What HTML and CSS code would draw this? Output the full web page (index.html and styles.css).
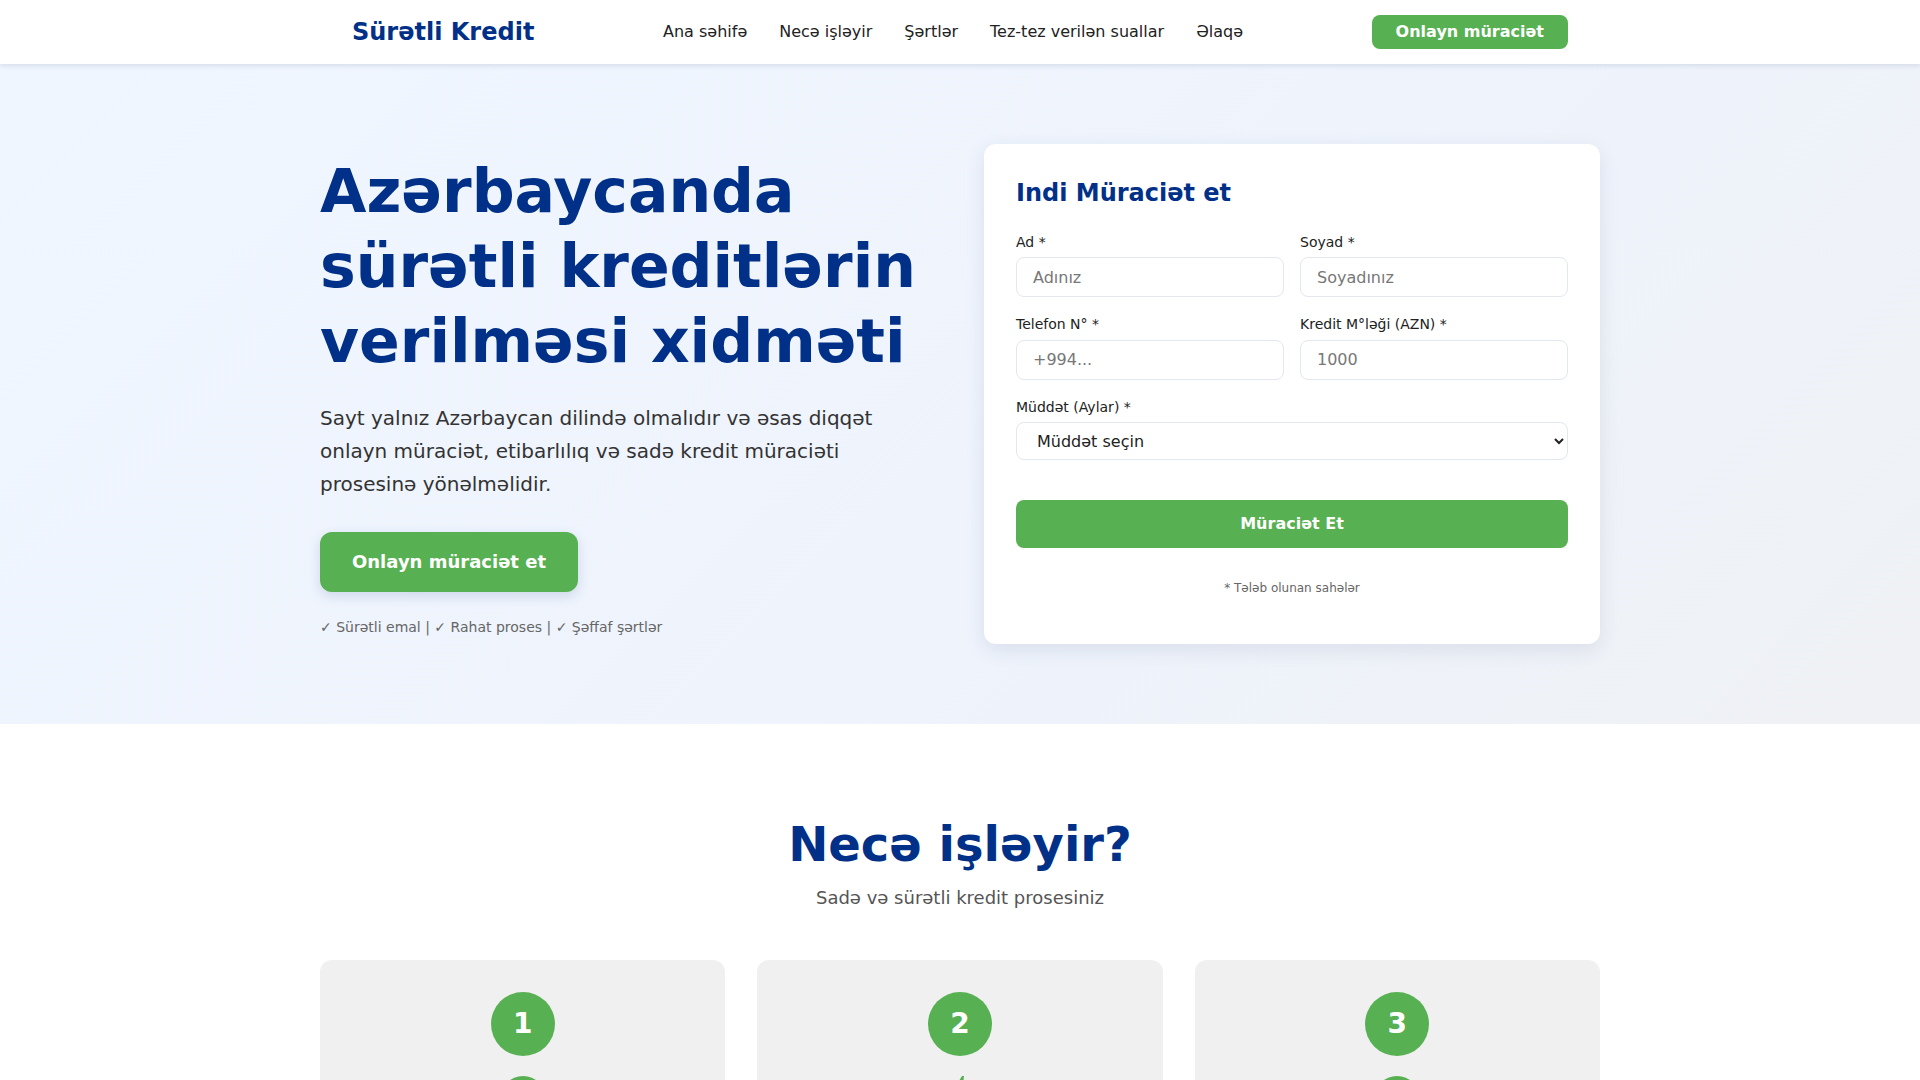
FILE: index.html
```html
<!DOCTYPE html>
<html lang="az">
<head>
<meta charset="UTF-8">
<title>Sürətli Kredit</title>
<link rel="stylesheet" href="styles.css">
</head>
<body>
<header class="site-header">
  <div class="header-inner">
    <a class="logo" href="#">Sürətli Kredit</a>
    <nav class="main-nav">
      <a href="#">Ana səhifə</a>
      <a href="#">Necə işləyir</a>
      <a href="#">Şərtlər</a>
      <a href="#">Tez-tez verilən suallar</a>
      <a href="#">Əlaqə</a>
    </nav>
    <a class="btn btn-header" href="#">Onlayn müraciət</a>
  </div>
</header>

<section class="hero">
  <div class="hero-inner">
    <div class="hero-text">
      <h1>Azərbaycanda sürətli kreditlərin verilməsi xidməti</h1>
      <p class="hero-lead">Sayt yalnız Azərbaycan dilində olmalıdır və əsas diqqət onlayn müraciət, etibarlılıq və sadə kredit müraciəti prosesinə yönəlməlidir.</p>
      <a class="btn btn-hero" href="#">Onlayn müraciət et</a>
      <p class="trust">✓ Sürətli emal | ✓ Rahat proses | ✓ Şəffaf şərtlər</p>
    </div>
    <div class="form-card">
      <h2>Indi Müraciət et</h2>
      <form class="apply-form">
        <div class="form-row">
          <div class="form-group">
            <label>Ad *</label>
            <input type="text" placeholder="Adınız">
          </div>
          <div class="form-group">
            <label>Soyad *</label>
            <input type="text" placeholder="Soyadınız">
          </div>
        </div>
        <div class="form-row">
          <div class="form-group">
            <label>Telefon N° *</label>
            <input type="text" placeholder="+994...">
          </div>
          <div class="form-group">
            <label>Kredit M°ləği (AZN) *</label>
            <input type="text" placeholder="1000">
          </div>
        </div>
        <div class="form-group">
          <label>Müddət (Aylar) *</label>
          <select>
            <option>Müddət seçin</option>
            <option>3 ay</option>
            <option>6 ay</option>
            <option>12 ay</option>
          </select>
        </div>
        <button type="button" class="btn btn-submit">Müraciət Et</button>
      </form>
      <p class="form-note">* Tələb olunan sahələr</p>
    </div>
  </div>
</section>

<section class="how">
  <h2>Necə işləyir?</h2>
  <p class="how-sub">Sadə və sürətli kredit prosesiniz</p>
  <div class="steps">
    <div class="step">
      <div class="step-num">1</div>
      <div class="step-icon">
        <svg viewBox="0 0 48 48" width="48" height="48"><circle cx="24" cy="24" r="23" fill="#57b051"/><circle cx="24" cy="18" r="7" fill="#f0f0f0"/><path d="M11 38c2-8 7-11 13-11s11 3 13 11z" fill="#f0f0f0"/></svg>
      </div>
      <h3>Onlayn müraciət</h3>
      <p>Formu doldurun və müraciətinizi göndərin.</p>
    </div>
    <div class="step">
      <div class="step-num">2</div>
      <div class="step-icon">
        <svg viewBox="0 0 48 48" width="48" height="48"><path d="M26 1 L10 27 H22 L19 47 L38 19 H26 L28 1 Z" fill="#57b051"/></svg>
      </div>
      <h3>Sürətli yoxlama</h3>
      <p>Müraciətiniz qısa müddətdə yoxlanılır.</p>
    </div>
    <div class="step">
      <div class="step-num">3</div>
      <div class="step-icon">
        <svg viewBox="0 0 48 48" width="48" height="48"><circle cx="24" cy="24" r="23" fill="#57b051"/><path d="M24 11v26M30 16h-8a4 4 0 0 0 0 8h4a4 4 0 0 1 0 8h-9" stroke="#f0f0f0" stroke-width="3" fill="none"/></svg>
      </div>
      <h3>Kreditin alınması</h3>
      <p>Vəsait hesabınıza köçürülür.</p>
    </div>
  </div>
</section>
</body>
</html>
```

FILE: styles.css
```css
* {
  box-sizing: border-box;
}

html, body {
  margin: 0;
  padding: 0;
}

body {
  font-family: "DejaVu Sans", Verdana, sans-serif;
  color: #333;
  line-height: 1.6;
  background: #fff;
}

a {
  text-decoration: none;
}

/* Header */
.site-header {
  background: #fff;
  box-shadow: 0 2px 5px rgba(40, 60, 110, 0.12);
  position: relative;
  z-index: 2;
}

.header-inner {
  max-width: 1280px;
  margin: 0 auto;
  padding: 0 32px;
  height: 64px;
  display: flex;
  align-items: center;
  justify-content: space-between;
}

.logo {
  font-size: 24px;
  font-weight: bold;
  color: #003087;
  line-height: 1.2;
}

.main-nav {
  display: flex;
  gap: 32px;
}

.main-nav a {
  color: #222;
  font-size: 16px;
}

.btn {
  display: inline-block;
  background: #57b051;
  color: #fff;
  font-weight: bold;
  border: none;
  font-family: inherit;
  cursor: pointer;
}

.btn-header {
  font-size: 16px;
  line-height: 18px;
  padding: 8px 24px;
  border-radius: 8px;
}

/* Hero */
.hero {
  background: linear-gradient(135deg, #f0f6ff 0%, #eef3fc 60%, #eff1f4 100%);
  padding: 80px 0;
}

.hero-inner {
  max-width: 1280px;
  margin: 0 auto;
  display: grid;
  grid-template-columns: 1fr 1fr;
  gap: 48px;
  align-items: center;
}

.hero-text {
  padding-top: 4px;
}

.hero-text h1 {
  font-size: 60px;
  line-height: 1.25;
  color: #003087;
  margin: 0 0 23px;
  font-weight: bold;
}

.hero-lead {
  font-size: 20px;
  line-height: 1.65;
  color: #333;
  margin: 0 0 31px;
}

.btn-hero {
  font-size: 18px;
  line-height: 28px;
  padding: 16px 32px;
  border-radius: 12px;
  box-shadow: 0 4px 12px rgba(60, 90, 140, 0.18);
}

.trust {
  margin: 24px 0 0;
  font-size: 14px;
  color: #666;
}

/* Form card */
.form-card {
  background: #fff;
  border-radius: 12px;
  padding: 32px;
  box-shadow: 0 6px 20px rgba(40, 60, 110, 0.1);
}

.form-card h2 {
  font-size: 24px;
  line-height: 1.2;
  color: #003087;
  margin: 3px 0 23px;
}

.form-row {
  display: grid;
  grid-template-columns: 1fr 1fr;
  gap: 16px;
}

.form-group {
  margin-bottom: 16px;
}

.form-group label {
  display: block;
  font-size: 14px;
  line-height: 22.4px;
  color: #222;
  margin-bottom: 4px;
}

.form-group input {
  display: block;
  width: 100%;
  height: 40px;
  padding: 0 16px;
  font-family: inherit;
  font-size: 16px;
  color: #222;
  border: 1px solid #e2e7f0;
  border-radius: 8px;
  background: #fff;
  outline: none;
}

.form-group input::placeholder {
  color: #777;
}

.form-group select {
  display: block;
  width: 100%;
  height: 38px;
  padding: 0 16px;
  font-family: inherit;
  font-size: 16px;
  color: #222;
  border: 1px solid #e2e7f0;
  border-radius: 8px;
  background: #fff;
}

.btn-submit {
  display: block;
  width: 100%;
  margin-top: 40px;
  font-size: 16px;
  line-height: 20px;
  padding: 14px 0;
  border-radius: 8px;
}

.form-note {
  text-align: center;
  font-size: 12px;
  color: #666;
  margin: 31px 0 14px;
}

/* How it works */
.how {
  padding: 92px 0 80px;
  text-align: center;
}

.how h2 {
  font-size: 48px;
  line-height: 1.2;
  color: #003087;
  margin: 0 0 10px;
}

.how-sub {
  font-size: 18px;
  color: #555;
  margin: 0 0 47px;
}

.steps {
  max-width: 1280px;
  margin: 0 auto;
  display: grid;
  grid-template-columns: repeat(3, 1fr);
  gap: 32px;
}

.step {
  background: #f0f0f0;
  border-radius: 12px;
  padding: 32px;
}

.step-num {
  width: 64px;
  height: 64px;
  border-radius: 50%;
  background: #57b051;
  color: #fff;
  font-size: 28px;
  font-weight: bold;
  line-height: 64px;
  margin: 0 auto 16px;
}

.step-icon {
  height: 56px;
  display: flex;
  justify-content: center;
  align-items: flex-start;
  padding-top: 3px;
}

.step h3 {
  font-size: 20px;
  color: #003087;
  margin: 16px 0 8px;
}

.step p {
  margin: 0;
  color: #555;
}
```
